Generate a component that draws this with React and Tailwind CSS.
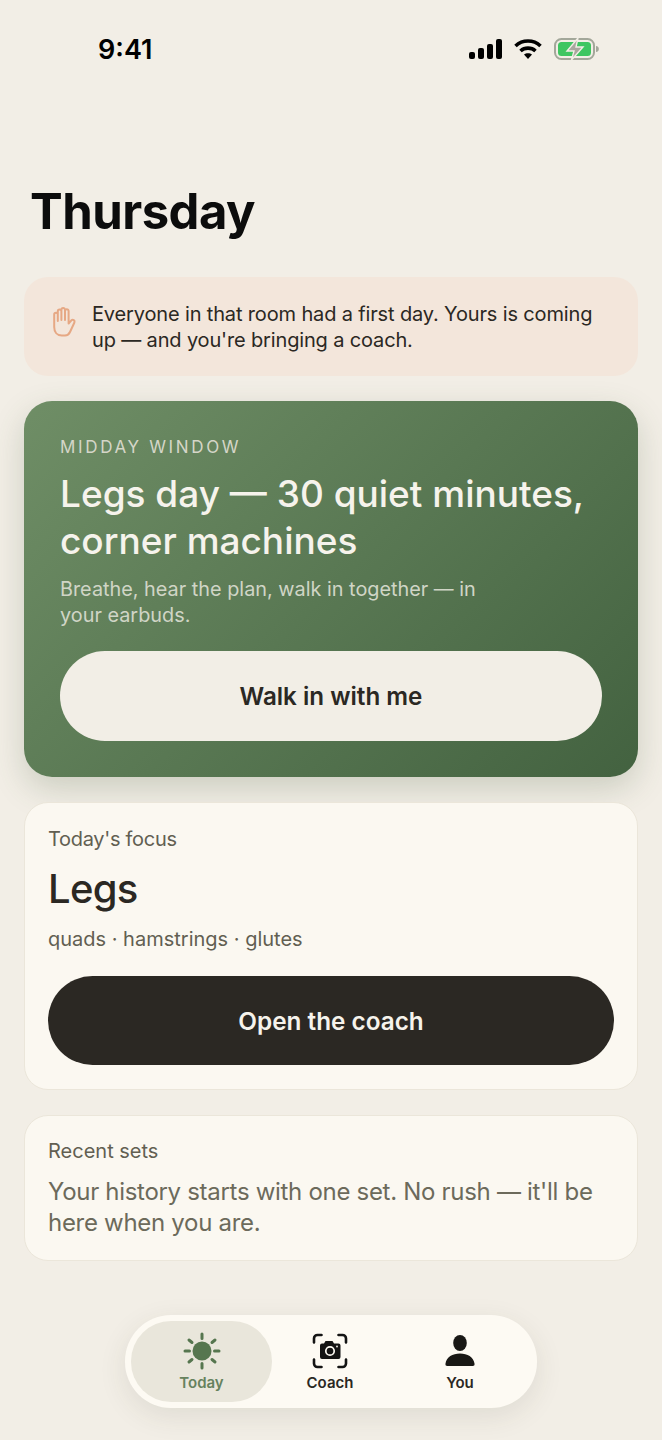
import React from "react";

const HandIcon = () => (
  <svg width="25" height="30" viewBox="0 0 25 30" fill="none" stroke="#e6a884" strokeWidth="2" strokeLinecap="round" strokeLinejoin="round" className="mb-[10px] shrink-0">
    <path d="M5.8 14V4.4a1.8 1.8 0 0 1 3.6 0V13M9.4 13V2.8a1.8 1.8 0 0 1 3.6 0V13M13 13V4a1.8 1.8 0 0 1 3.6 0v12.5l2.8-3.2a1.9 1.9 0 0 1 3 2.2L18 25a6 6 0 0 1-5 3.5H9.8C5 28.5 2.2 25 2.2 20V7.6a1.8 1.8 0 0 1 3.6 0" />
  </svg>
);

const SunIcon = () => (
  <svg width="40" height="40" viewBox="0 0 40 40" fill="none" stroke="#56764f" strokeWidth="3" strokeLinecap="round">
    <circle cx="20" cy="20" r="9.5" fill="#56764f" stroke="none" />
    <path d="M20 3v4.5M20 32.5V37M3 20h4.5M32.5 20H37M7 9l3 2.5M33 9l-3 2.5M7 31l3-2.5M33 31l-3-2.5" />
  </svg>
);

const CoachIcon = () => (
  <svg width="36" height="36" viewBox="0 0 36 36" fill="none">
    <path d="M2 9.5v-4A3.5 3.5 0 0 1 5.5 2h4M26.5 2h4A3.5 3.5 0 0 1 34 5.5v4M34 26.5v4a3.5 3.5 0 0 1-3.5 3.5h-4M9.5 34h-4A3.5 3.5 0 0 1 2 30.5v-4" stroke="#141414" strokeWidth="2.6" strokeLinecap="round" />
    <path d="M12 10.5L13.5 8h7L22 10.5h4.5a2 2 0 0 1 2 2V24a2 2 0 0 1-2 2H10a2 2 0 0 1-2-2V12.5a2 2 0 0 1 2-2z" fill="#141414" />
    <circle cx="18" cy="18" r="4.2" fill="none" stroke="#fdfaf3" strokeWidth="1.7" />
    <circle cx="25" cy="13.5" r="0.9" fill="#fdfaf3" />
  </svg>
);

const PersonIcon = () => (
  <svg width="30" height="32" viewBox="0 0 30 32" fill="#191815">
    <ellipse cx="15" cy="8" rx="6.8" ry="8" />
    <path d="M.5 28.5C1.500 22 7.500 18.500 15 18.500s13.500 3.500 14.500 10c.3 1.800-.5 2.500-1.800 2.500H2.300c-1.300 0-2.100-.7-1.800-2.500z" />
  </svg>
);

const StatusBar = () => (
  <div className="flex h-[98px] items-center justify-between pl-[98px] pr-[62px] text-black">
    <span className="text-[27px] font-semibold leading-none">9:41</span>
    <div className="flex items-center">
      <svg width="34" height="20" viewBox="0 0 34 20" fill="#000" className="mr-[11px]">
        <rect x="0" y="13" width="6" height="7" rx="2" />
        <rect x="9" y="9" width="6" height="11" rx="2" />
        <rect x="18" y="5" width="6" height="15" rx="2" />
        <rect x="27" y="0" width="6" height="20" rx="2" />
      </svg>
      <svg width="28" height="20" viewBox="0 0 28 20" fill="none" stroke="#000" strokeWidth="3.6" className="mr-[12px]">
        <path d="M1.5 7C8.5.4 19.500.4 26.500 7" />
        <path d="M6.5 12c4.2-3.800 10.800-3.800 15 0" />
        <path d="M14 20l-4-4.500c2.200-1.700 5.800-1.700 8 0z" fill="#000" stroke="none" />
      </svg>
      <svg width="46" height="22" viewBox="0 0 46 22" fill="none">
        <rect x="1" y="1" width="39" height="20" rx="6.5" stroke="#a3a79a" strokeWidth="2" />
        <rect x="4" y="4" width="33" height="14" rx="3.5" fill="#3ec661" />
        <path d="M42 8c2 0 2.800 1.400 2.800 3s-.8 3-2.800 3z" fill="#a3a79a" />
        <path d="M24 0L13 13h7l-2.500 9L29 9h-7z" fill="#a9a79f" stroke="#f2eee6" strokeWidth="1.4" />
      </svg>
    </div>
  </div>
);

const NavItem = ({ icon, label, active, width }) => (
  <div className={`flex h-[81px] shrink-0 flex-col items-center justify-center gap-[3px] rounded-[40px] ${width} ${active ? "bg-[#e9e6db] text-[#66825e]" : "text-[#2b2823]"}`}>
    <div className="flex h-[40px] items-center">{icon}</div>
    <span className="text-[15px] font-semibold leading-[18px]">{label}</span>
  </div>
);

export default function App() {
  return (
    <div className="h-[1440px] overflow-hidden bg-[#f2eee6] font-['Inter',sans-serif]">
      <StatusBar />

      <h1 className="mt-[81px] ml-[30px] text-[49px] font-bold leading-[66px] tracking-[-0.5px] text-[#0c0c0c]">Thursday</h1>

      <div className="mx-[24px] mt-[32px] space-y-[25px]">
        <div className="flex h-[99px] items-center gap-[15px] rounded-[24px] bg-[#f3e6db] pl-[28px] pr-[24px]">
          <HandIcon />
          <p className="text-[20px] leading-[26px] tracking-[-0.15px] text-[#2b2823]">
            Everyone in that room had a first day. Yours is coming up — and you're bringing a coach.
          </p>
        </div>

        <div className="h-[376px] rounded-[28px] bg-[linear-gradient(135deg,#6f8e66,#436240)] px-[36px] pt-[35px] shadow-[0_12px_32px_rgba(70,90,60,0.22)]">
          <p className="text-[17px] uppercase leading-[22px] tracking-[2.65px] text-[#d5d6c8]">Midday window</p>
          <h2 className="mt-[12px] text-[37px] font-medium leading-[47px] text-[#f6f3ec]">
            Legs day — 30 quiet minutes, corner machines
          </h2>
          <p className="mt-[12px] w-[440px] text-[19.85px] leading-[26px] text-[#d0d5c6]">
            Breathe, hear the plan, walk in together — in your earbuds.
          </p>
          <button className="mt-[23px] flex h-[90px] w-full items-center justify-center rounded-[45px] bg-[#f2eee6] pt-[2px] text-[24.2px] font-semibold text-[#2b2823]">
            Walk in with me
          </button>
        </div>

        <div className="h-[288px] rounded-[24px] border border-[#ebe6da] bg-[#fbf8f1] px-[23px] pt-[23px]">
          <p className="text-[20px] leading-[26px] tracking-[-0.3px] text-[#625f52]">Today's focus</p>
          <p className="mt-[12px] text-[40px] font-medium leading-[50px] tracking-[-0.7px] text-[#2b2823]">Legs</p>
          <p className="mt-[12px] text-[20px] leading-[26px] text-[#625f52]">quads · hamstrings · glutes</p>
          <button className="mt-[24px] flex h-[89px] w-full items-center justify-center rounded-[45px] bg-[#2b2823] pt-[2px] text-[24.3px] font-semibold text-[#f6f3ec]">
            Open the coach
          </button>
        </div>

        <div className="h-[146px] rounded-[24px] border border-[#ebe6da] bg-[#fbf8f1] px-[23px] pt-[22px]">
          <p className="text-[20px] leading-[26px] text-[#625f52]">Recent sets</p>
          <p className="mt-[12px] text-[24px] leading-[31px] tracking-[-0.3px] text-[#6c6a5b]">
            Your history starts with one set. No rush — it'll be here when you are.
          </p>
        </div>
      </div>

      <div className="mt-[54px] flex justify-center">
        <nav className="flex h-[93px] w-[412px] items-center rounded-[46px] bg-[#fdfaf3] px-[6px] shadow-[0_8px_28px_rgba(60,55,40,0.1)]">
          <NavItem icon={<SunIcon />} label="Today" active width="w-[141px]" />
          <NavItem icon={<CoachIcon />} label="Coach" width="w-[116px]" />
          <NavItem icon={<PersonIcon />} label="You" width="w-[144px]" />
        </nav>
      </div>
    </div>
  );
}
